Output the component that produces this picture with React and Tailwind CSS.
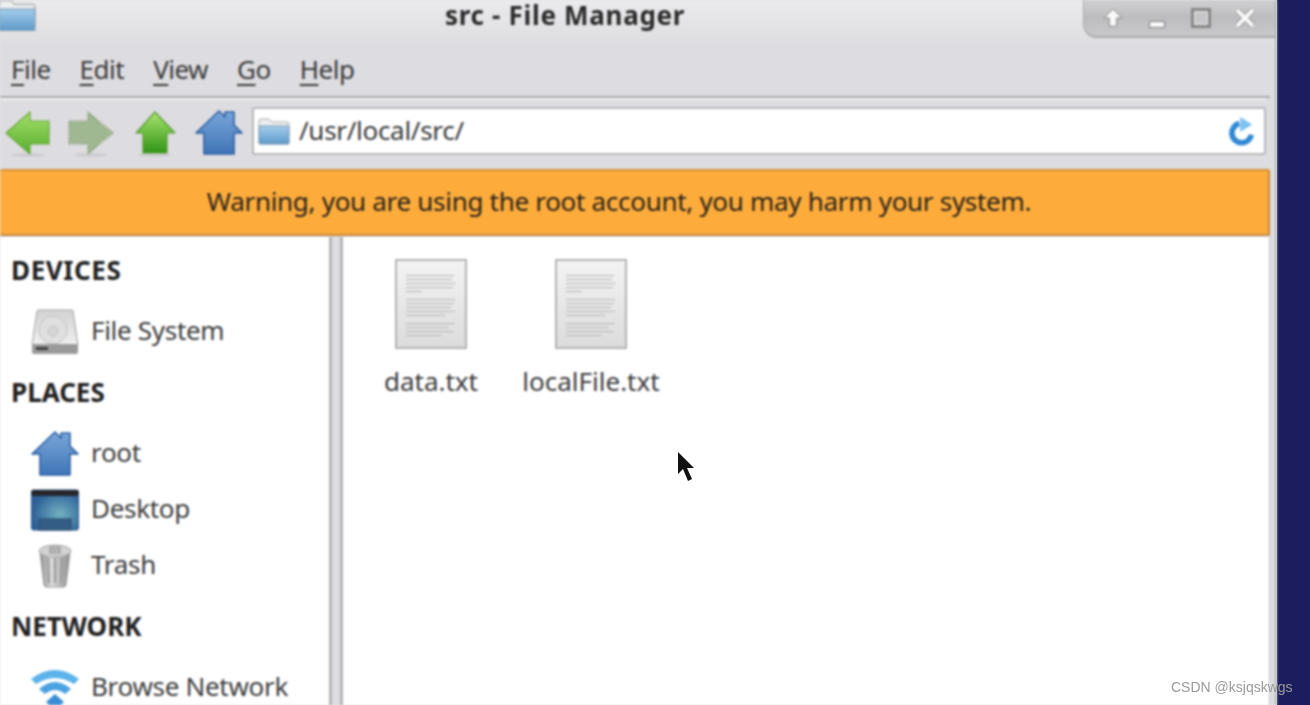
function FolderIcon({ className }) {
  return (
    <svg viewBox="0 0 32 28" className={className}>
      <path d="M1 4 Q1 2 3 2 L11 2 L14 5 L29 5 Q31 5 31 7 L31 26 Q31 27 30 27 L2 27 Q1 27 1 26 Z" fill="#eeeef0" stroke="#a9a9ad" strokeWidth="1" />
      <path d="M1 9 L31 9 L31 26 Q31 27 30 27 L2 27 Q1 27 1 26 Z" fill="url(#fold)" stroke="#7f9db8" strokeWidth="1" />
      <defs>
        <linearGradient id="fold" x1="0" y1="0" x2="0" y2="1">
          <stop offset="0" stopColor="#a5cdea" />
          <stop offset="1" stopColor="#5e9acb" />
        </linearGradient>
      </defs>
    </svg>
  );
}

function HomeIcon({ className }) {
  return (
    <svg viewBox="0 0 48 46" className={className}>
      <defs>
        <linearGradient id="home" x1="0" y1="0" x2="0" y2="1">
          <stop offset="0" stopColor="#7aa6d8" />
          <stop offset="1" stopColor="#3f76b8" />
        </linearGradient>
      </defs>
      <path d="M1 23 L24 1 L30 7 L30 2 L39 2 L39 15 L47 23 L39 23 L39 44 L9 44 L9 23 Z" fill="url(#home)" stroke="#2d5fa3" strokeWidth="1.6" strokeLinejoin="round" />
    </svg>
  );
}

function Arrow({ d, id, from, to, stroke, dither, className }) {
  return (
    <svg viewBox="0 0 48 50" className={className}>
      <defs>
        <linearGradient id={id} x1="0" y1="0" x2="0" y2="1">
          <stop offset="0" stopColor={from} />
          <stop offset="1" stopColor={to} />
        </linearGradient>
        <pattern id="dith" width="4" height="4" patternUnits="userSpaceOnUse">
          <rect width="4" height="4" fill="#d2d5cc" />
          <rect width="2" height="2" fill="#6f9a58" />
          <rect x="2" y="2" width="2" height="2" fill="#6f9a58" />
        </pattern>
      </defs>
      <ellipse cx="24" cy="47" rx="17" ry="2.2" fill="#cfced2" />
      <path d={d} fill={dither ? "url(#dith)" : `url(#${id})`} stroke={stroke} strokeWidth="1.2" strokeLinejoin="round" strokeDasharray={dither ? "2 1.5" : undefined} />
    </svg>
  );
}

function Disk() {
  return (
    <svg viewBox="0 0 48 46" className="w-[48px] h-[46px]">
      <defs>
        <linearGradient id="disk" x1="0" y1="0" x2="0" y2="1">
          <stop offset="0" stopColor="#d2d2d2" />
          <stop offset="1" stopColor="#efefef" />
        </linearGradient>
      </defs>
      <path d="M6 2 Q6 1 8 1 L40 1 Q42 1 42 2 L47 36 L1 36 Z" fill="url(#disk)" stroke="#a3a3a3" />
      <circle cx="22" cy="21" r="14" fill="#dfdfdf" stroke="#c4c4c4" />
      <circle cx="22" cy="22" r="5" fill="#d6d6d6" stroke="#c0c0c0" />
      <rect x="1" y="35" width="46" height="10" rx="2" fill="#9a9a9a" />
      <rect x="5" y="38" width="12" height="3" fill="#404040" />
    </svg>
  );
}

function DesktopIcon() {
  return (
    <svg viewBox="0 0 48 42" className="w-[48px] h-[42px]">
      <defs>
        <radialGradient id="desk" cx="0.6" cy="0.6" r="0.6">
          <stop offset="0" stopColor="#72b1c1" />
          <stop offset="1" stopColor="#2c5f97" />
        </radialGradient>
      </defs>
      <rect x="0.5" y="1" width="47" height="40" rx="2" fill="url(#desk)" stroke="#2b5a8e" />
      <rect x="0.5" y="1" width="47" height="6" rx="1" fill="#26262b" />
      <rect x="8" y="30" width="32" height="11" fill="#345d85" stroke="#2a4a6c" />
    </svg>
  );
}

function TrashIcon() {
  return (
    <svg viewBox="0 0 34 44" className="w-[34px] h-[44px]">
      <defs>
        <linearGradient id="tr" x1="0" y1="0" x2="1" y2="0">
          <stop offset="0" stopColor="#8e8e8e" />
          <stop offset="0.4" stopColor="#dcdcdc" />
          <stop offset="1" stopColor="#8d8d8d" />
        </linearGradient>
      </defs>
      <path d="M2 9 L6 41 Q6 43 9 43 L25 43 Q28 43 28 41 L32 9 Z" fill="url(#tr)" stroke="#9a9a9a" />
      <path d="M10 14 L11 39 M17 14 L17 39 M24 14 L23 39" stroke="#999" strokeWidth="2" />
      <ellipse cx="17" cy="7" rx="16" ry="6" fill="#d2d2d2" stroke="#a5a5a5" />
      <rect x="12" y="3" width="10" height="6" fill="#b4b4b4" stroke="#939393" />
    </svg>
  );
}

function WifiIcon() {
  return (
    <svg viewBox="0 0 48 34" className="w-[48px] h-[34px] overflow-visible">
      <path d="M0 10 Q24 -8 48 10 L43 15 Q24 3 5 15 Z" fill="#5cb2ea" />
      <path d="M8 20 Q24 6 40 20 L34 25 Q24 17 14 25 Z" fill="#4ba2e0" />
      <path d="M24 25 L33 33 L24 41 L15 33 Z" fill="#3b8ed6" />
    </svg>
  );
}

function DocIcon() {
  const groups = [
    [122, 118, 126, 120, 40],
    [126, 122, 116, 124, 100],
    [126, 108, 120, 90],
  ];
  return (
    <div className="w-[72px] h-[90px] border-2 border-[#b2b2b2] bg-gradient-to-b from-[#f3f3f3] to-[#dcdcdc] pt-[14px] pl-[9px] flex flex-col gap-[7px]">
      {groups.map((g, i) => (
        <div key={i} className="flex flex-col gap-[3px]">
          {g.map((w, j) => (
            <div key={j} className="h-px bg-[#b4b4b4]" style={{ width: w / 2.55 }} />
          ))}
        </div>
      ))}
    </div>
  );
}

function SideHead({ children, className }) {
  return <div className={`pl-[11px] pb-[3px] h-[32px] flex items-center text-[26px] font-bold text-[#202020] ${className}`}>{children}</div>;
}

function SideItem({ icon, label }) {
  return (
    <div className="flex items-center h-[56px] pl-[31px]">
      <div className="w-[48px] flex justify-center shrink-0">{icon}</div>
      <span className="ml-[12px] pb-[3px] text-[26px] tracking-[-0.3px] text-[#3c3c3c]">{label}</span>
    </div>
  );
}

function Menu({ u, rest }) {
  return (
    <span>
      <span className="underline decoration-2 underline-offset-[5px]">{u}</span>
      {rest}
    </span>
  );
}

function File({ name }) {
  return (
    <div className="flex flex-col items-center w-[160px]">
      <DocIcon />
      <span className="mt-[14px] text-[26px] leading-[36px] text-[#3c3c3c]">{name}</span>
    </div>
  );
}

export default function App() {
  return (
    <div className="relative w-[1310px] h-[705px] overflow-hidden bg-[#e4e3e6] flex font-['Noto_Sans',sans-serif]">
      <div className="w-[1277px] h-full flex flex-col bg-[#dddce0] border-r-2 border-[#b3b3b6] blur-[0.8px] shrink-0">
        {/* title bar */}
        <div className="relative h-[48px] shrink-0 bg-gradient-to-b from-[#ebeaec] to-[#dddce0] flex items-start">
          <div className="w-[38px] h-[33px] overflow-hidden relative shrink-0 -ml-[1px]">
            <FolderIcon className="w-[38px] h-[36px] -mt-[3px] -ml-[1px]" />
          </div>
          <div className="flex-1 text-center text-[26px] font-bold leading-[30px] text-[#2b2b2b] tracking-[0.7px] pl-[10px]">src - File Manager</div>
          <div className="w-[192px] h-[38px] shrink-0 bg-gradient-to-b from-[#d0d0d2] via-[#bdbdbf] to-[#c9c9cb] rounded-bl-[14px] border-l border-b-2 border-[#a9a9ac] flex items-center">
            <svg viewBox="0 0 24 24" className="w-[22px] h-[22px] ml-[18px]">
              <path d="M12 2 L22 12 L16 12 L16 21 L8 21 L8 12 L2 12 Z" fill="#fafafa" stroke="#7c7c7c" strokeWidth="1" />
            </svg>
            <div className="w-[16px] h-[7px] ml-[25px] mt-[12px] bg-[#fafafa] border border-[#7c7c7c]" />
            <div className="w-[20px] h-[20px] ml-[26px] border-[3px] border-[#858585] bg-[#c6c6c8] shadow-[inset_0_0_0_1px_#eee]" />
            <svg viewBox="0 0 24 24" className="w-[24px] h-[24px] ml-[22px]">
              <path d="M4 4 L20 20 M20 4 L4 20" stroke="#8c8c8c" strokeWidth="6" />
              <path d="M4 4 L20 20 M20 4 L4 20" stroke="#fafafa" strokeWidth="4" />
            </svg>
          </div>
        </div>
        {/* menu */}
        <div className="h-[50px] shrink-0 flex items-center text-[26px] tracking-[-0.5px] text-[#3a3a3a] pl-[11px] pb-[5px] gap-[29px] border-b-2 border-[#a9a9ad] mr-[5px]">
          <Menu u="F" rest="ile" />
          <Menu u="E" rest="dit" />
          <Menu u="V" rest="iew" />
          <Menu u="G" rest="o" />
          <Menu u="H" rest="elp" />
        </div>
        {/* toolbar */}
        <div className="h-[71px] shrink-0 flex items-center border-t-2 border-[#f2f2f4] mr-[9px] pl-[4px] pb-[3px]">
          <Arrow id="a1" from="#a5e06a" to="#56ad2d" stroke="#6aa83f" d="M2 25 L26 4 L26 13 L45 13 L45 36 L26 36 L26 46 Z" className="w-[48px] h-[50px]" />
          <Arrow id="a2" dither from="#999" to="#999" stroke="#8a9f7c" d="M46 25 L21 4 L21 13 L2 13 L2 36 L21 36 L21 46 Z" className="w-[48px] h-[50px] ml-[15px]" />
          <Arrow id="a3" from="#a9e46e" to="#2f9414" stroke="#5a9c35" d="M24 4 L44 25 L36 25 L36 45 L12 45 L12 25 L5 25 Z" className="w-[48px] h-[50px] ml-[16px]" />
          <HomeIcon className="w-[48px] h-[46px] ml-[16px]" />
          <div className="ml-[9px] mb-[4px] flex-1 h-[48px] bg-white border-2 border-[#b7b6ba] rounded-[3px] flex items-center pl-[4px] pr-[8px]">
            <FolderIcon className="w-[32px] h-[28px]" />
            <span className="ml-[9px] pb-[2px] flex-1 text-[26px] tracking-[-0.3px] text-[#3a3a3a]">/usr/local/src/</span>
            <svg viewBox="0 0 30 32" className="w-[28px] h-[32px]">
              <path d="M25 20 A10.5 10.5 0 1 1 12 8" fill="none" stroke="#2f88d4" strokeWidth="6" />
              <path d="M13 1 L26 9 L13 17 Z" fill="#7cc2f0" />
            </svg>
          </div>
        </div>
        {/* warning */}
        <div className="h-[67px] shrink-0 bg-[#fdac3b] border-y-2 border-t-[#d6923a] border-b-[#c48a3e] rounded-[2px] border-r-2 border-r-[#c48a3e] mr-[5px] pr-[30px] pb-[3px] flex items-center justify-center text-[26px] tracking-[-0.3px] text-[#2c2419]">
          Warning, you are using the root account, you may harm your system.
        </div>
        {/* main */}
        <div className="flex-1 min-h-0 flex mt-[1px] pr-[5px]">
          <div className="w-[329px] shrink-0 bg-white pt-[19px] overflow-hidden">
            <SideHead className="tracking-[0.6px]">DEVICES</SideHead>
            <div className="h-[16px]" />
            <SideItem icon={<Disk />} label="File System" />
            <div className="h-[18px]" />
            <SideHead>PLACES</SideHead>
            <div className="h-[16px]" />
            <SideItem icon={<HomeIcon className="w-[48px] h-[46px]" />} label="root" />
            <SideItem icon={<DesktopIcon />} label="Desktop" />
            <SideItem icon={<TrashIcon />} label="Trash" />
            <div className="h-[18px]" />
            <SideHead>NETWORK</SideHead>
            <div className="h-[16px]" />
            <SideItem icon={<div className="h-[34px] -mt-[4px]"><WifiIcon /></div>} label="Browse Network" />
          </div>
          <div className="w-[14px] shrink-0 bg-[#dddce0] border-x-[3px] border-l-[#b5b5b8] border-r-[#b5b5b8]" />
          <div className="flex-1 bg-white flex pt-[22px] pl-[8px] items-start border-r border-[#c5c5c8]">
            <File name="data.txt" />
            <File name="localFile.txt" />
          </div>
        </div>
      </div>
      <div className="flex-1 h-full bg-[#1c1d5f]" />
      {/* pointer */}
      <svg viewBox="0 0 18 32" className="absolute left-[677px] top-[451px] w-[18px] h-[32px]">
        <path d="M1 1 L1 23 L6 18 L11 30 L15 28 L10 17 L17 17 Z" fill="#111" />
      </svg>
      {/* watermark */}
      <div className="absolute left-[1171px] top-[678px] text-[14px] leading-[18px] text-[#9b9b9b] font-['Liberation_Sans',sans-serif]">CSDN @ksjqskwgs</div>
    </div>
  );
}
